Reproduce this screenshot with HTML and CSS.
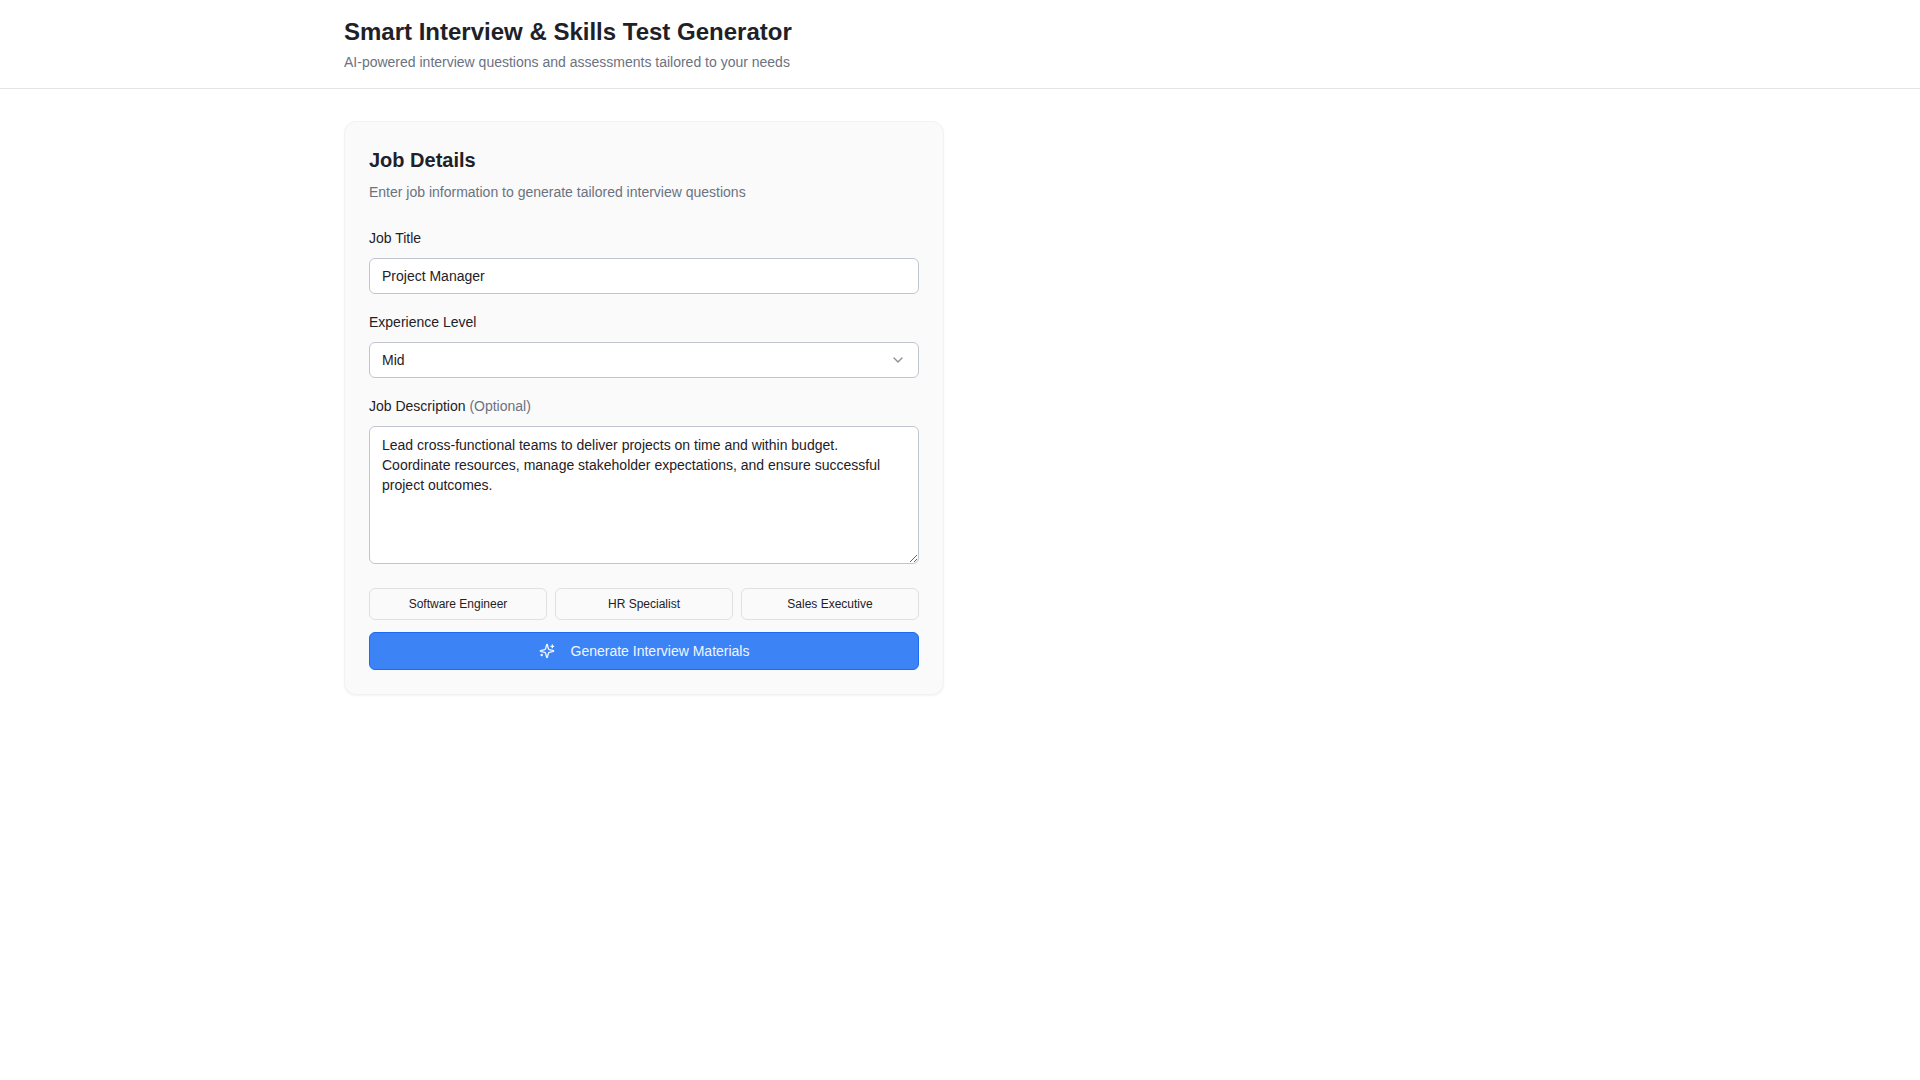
FILE: index.html
```html
<!DOCTYPE html>
<html lang="en">
<head>
  <meta charset="UTF-8" />
  <meta name="viewport" content="width=device-width, initial-scale=1.0"/>
  <title>Smart Interview &amp; Skills Test Generator</title>
  <link rel="stylesheet" href="styles.css">
</head>
<body>

  <header class="site-header">
    <div class="container">
      <h1>Smart Interview &amp; Skills Test Generator</h1>
      <p class="muted">AI-powered interview questions and assessments tailored to your needs</p>
    </div>
  </header>

  <main class="container layout">
    <section class="card">
      <div class="card-header">
        <h2>Job Details</h2>
        <p class="muted">Enter job information to generate tailored interview questions</p>
      </div>

      <form class="job-form">
        <div class="field">
          <label for="jobTitle">Job Title</label>
          <input type="text" id="jobTitle" class="control" value="Project Manager" />
        </div>

        <div class="field">
          <label for="level">Experience Level</label>
          <div class="select-wrap">
            <select id="level" class="control">
              <option>Junior</option>
              <option selected>Mid</option>
              <option>Senior</option>
            </select>
            <svg class="chevron" viewBox="0 0 24 24" aria-hidden="true"><path d="m6 9 6 6 6-6"/></svg>
          </div>
        </div>

        <div class="field">
          <label for="description">Job Description <span class="muted">(Optional)</span></label>
          <textarea id="description" class="control" rows="6">Lead cross-functional teams to deliver projects on time and within budget. Coordinate resources, manage stakeholder expectations, and ensure successful project outcomes.</textarea>
        </div>

        <div class="actions">
          <div class="presets">
            <button type="button" class="btn btn-outline">Software Engineer</button>
            <button type="button" class="btn btn-outline">HR Specialist</button>
            <button type="button" class="btn btn-outline">Sales Executive</button>
          </div>
          <button type="submit" class="btn btn-primary">
            <svg class="icon" viewBox="0 0 24 24" aria-hidden="true">
              <path d="M9.937 15.5A2 2 0 0 0 8.5 14.063l-6.135-1.582a.5.5 0 0 1 0-.962L8.5 9.936A2 2 0 0 0 9.937 8.5l1.582-6.135a.5.5 0 0 1 .963 0L14.063 8.5A2 2 0 0 0 15.5 9.937l6.135 1.581a.5.5 0 0 1 0 .964L15.5 14.063a2 2 0 0 0-1.437 1.437l-1.582 6.135a.5.5 0 0 1-.963 0z"/>
              <path d="M20 3v4"/>
              <path d="M22 5h-4"/>
              <path d="M4 17v2"/>
              <path d="M5 18H3"/>
            </svg>
            Generate Interview Materials
          </button>
        </div>
      </form>
    </section>
  </main>

</body>
</html>
```

FILE: styles.css
```css
* {
  box-sizing: border-box;
}

body {
  margin: 0;
  font-family: "Liberation Sans", Arial, sans-serif;
  font-size: 14px;
  line-height: 20px;
  background: #fff;
  color: #1e2127;
}

h1, h2, p {
  margin: 0;
}

.container {
  max-width: 1280px;
  margin: 0 auto;
  padding: 0 24px;
}

.muted {
  color: #6b7280;
}

.site-header {
  padding: 16px 0;
  border-bottom: 1px solid #e5e5e5;
}

.site-header h1 {
  margin-bottom: 4px;
  font-size: 24px;
  line-height: 32px;
}

.layout {
  display: grid;
  grid-template-columns: repeat(2, minmax(0, 1fr));
  gap: 32px;
  padding-top: 32px;
  padding-bottom: 32px;
}

.card {
  padding: 24px;
  background: #fafafa;
  border: 1px solid #f2f2f2;
  border-radius: 12px;
  box-shadow: 0 1px 2px rgba(0, 0, 0, 0.05);
}

.card-header {
  display: flex;
  flex-direction: column;
  gap: 8px;
  margin-bottom: 24px;
}

.card-header h2 {
  font-size: 20px;
  line-height: 28px;
}

.job-form {
  display: flex;
  flex-direction: column;
  gap: 16px;
}

.field {
  display: flex;
  flex-direction: column;
  gap: 8px;
}

.field label {
  line-height: 24px;
}

.control {
  display: block;
  width: 100%;
  height: 36px;
  padding: 8px 12px;
  font: inherit;
  color: inherit;
  background: #fff;
  border: 1px solid #c1c5d0;
  border-radius: 6px;
}

textarea.control {
  height: auto;
  resize: vertical;
}

.select-wrap {
  position: relative;
}

select.control {
  padding: 0 36px 0 12px;
  appearance: none;
}

.chevron,
.icon {
  width: 16px;
  height: 16px;
  fill: none;
  stroke: currentColor;
  stroke-width: 2;
  stroke-linecap: round;
  stroke-linejoin: round;
}

.chevron {
  position: absolute;
  top: 10px;
  right: 13px;
  opacity: 0.5;
  pointer-events: none;
}

.actions {
  display: flex;
  flex-direction: column;
  gap: 12px;
  margin-top: 8px;
}

.presets {
  display: grid;
  grid-template-columns: repeat(3, 1fr);
  gap: 8px;
}

.btn {
  display: flex;
  align-items: center;
  justify-content: center;
  font-family: inherit;
  border-radius: 6px;
  cursor: pointer;
}

.btn-outline {
  height: 32px;
  padding: 0 12px;
  font-size: 12px;
  color: inherit;
  background: transparent;
  border: 1px solid #e0e0e0;
}

.btn-primary {
  gap: 16px;
  height: 38px;
  font-size: 14px;
  color: #f1f6fe;
  background: #3c83f6;
  border: 1px solid #1a6bf2;
}
```
